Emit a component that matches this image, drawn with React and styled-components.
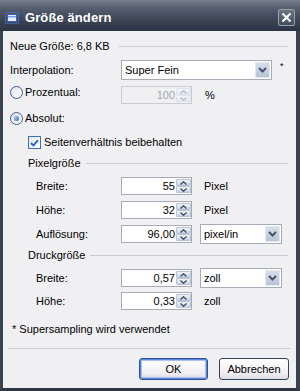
import React from 'react';
import styled, { createGlobalStyle, css } from 'styled-components';

const Global = createGlobalStyle`
  html, body { margin: 0; padding: 0; background: #2f3747; }
  body { font-family: "Liberation Sans", Arial, sans-serif; font-size: 11px; color: #000; }
  #root { width: 300px; height: 391px; }
`;

const Window = styled.div`
  width: 300px;
  height: 391px;
  display: flex;
  flex-direction: column;
  background: #f0f0f3;
  overflow: hidden;
`;

const TitleBar = styled.div`
  flex: 0 0 31px;
  box-sizing: border-box;
  display: flex;
  align-items: center;
  padding: 4px 5px 0 5px;
  background: linear-gradient(#737d8b 0%, #525c6c 30%, #3a4252 70%, #2d3444 100%);
`;

const TitleText = styled.div`
  margin-left: 6px;
  color: #fff;
  font-weight: bold;
  font-size: 13px;
  letter-spacing: 0.1px;
`;

const CloseBtn = styled.div`
  margin-left: auto;
  width: 17px;
  height: 17px;
  box-sizing: border-box;
  border: 1px solid #98a1ad;
  border-radius: 2px;
  background: linear-gradient(#6a7482, #424b5b);
  display: flex;
  align-items: center;
  justify-content: center;
`;

const Frame = styled.div`
  flex: 1;
  display: flex;
  flex-direction: column;
  border-left: 3px solid #3a4250;
  border-right: 4px solid #3a4250;
  border-bottom: 3px solid #2e3544;
  padding: 0 8px 0 7px;
`;

const Row = styled.div`
  display: flex;
  align-items: ${p => p.$align || 'center'};
  height: ${p => p.$h}px;
  margin-top: ${p => p.$mt}px;
  padding-left: ${p => p.$indent || 0}px;
  line-height: 13px;
  white-space: nowrap;
`;

const Label = styled.div`
  flex: 0 0 ${p => p.$w}px;
  display: flex;
  align-items: center;
`;

const Rule = styled.div`
  flex: 1;
  height: 1px;
  margin-left: ${p => p.$gap}px;
  background: #cbcbd0;
`;

const Separator = styled.div`
  height: 1px;
  margin: 12px -2px 0 -2px;
  background: #cbcbd0;
`;

const SpinBox = styled.div`
  display: flex;
  width: 71px;
  height: 18px;
  box-sizing: border-box;
  border: 1px solid ${p => (p.$disabled ? '#c9ccd2' : '#a5acb5')};
  background: ${p => (p.$disabled ? 'transparent' : '#fff')};
  color: ${p => (p.$disabled ? '#a4a7ae' : '#000')};
`;

const SpinValue = styled.div`
  flex: 1;
  text-align: right;
  padding-right: 1px;
  line-height: 16px;
`;

const SpinButtons = styled.div`
  width: 15px;
  display: flex;
  flex-direction: column;
  padding: 1px 0;
  box-sizing: border-box;
`;

const SpinBtn = styled.div`
  flex: 1;
  border: 1px solid ${p => (p.$disabled ? '#dfe4ec' : '#b8c4d6')};
  border-radius: 1px;
  background: ${p => (p.$disabled ? 'linear-gradient(#f3f5f9, #e3e8f0)' : 'linear-gradient(#f1f4f9, #c9d4e5)')};
  display: flex;
  align-items: center;
  justify-content: center;
`;

const Select = styled.div`
  display: flex;
  width: ${p => p.$w}px;
  height: 20px;
  box-sizing: border-box;
  border: 1px solid #a5acb5;
  background: #fff;
  margin-left: ${p => p.$ml || 0}px;
`;

const SelectText = styled.div`
  flex: 1;
  padding-left: 3px;
  line-height: 18px;
`;

const SelectBtn = styled.div`
  width: 15px;
  margin: 1px;
  box-sizing: border-box;
  border: 1px solid #e3e8f1;
  background: linear-gradient(#d7deea, #b9c4d6);
  display: flex;
  align-items: center;
  justify-content: center;
`;

const Unit = styled.div`
  margin-left: ${p => p.$ml}px;
`;

const Star = styled.div`
  margin-left: 8px;
  align-self: flex-start;
  font-size: 9px;
  line-height: 9px;
  margin-top: 2px;
`;

const RadioCircle = styled.div`
  width: 13px;
  height: 13px;
  box-sizing: border-box;
  border-radius: 50%;
  border: 1px solid #3f5f8f;
  background: linear-gradient(135deg, #dfe3ea, #ffffff);
  margin-right: 2px;
  display: flex;
  align-items: center;
  justify-content: center;
  &::after {
    content: '';
    display: ${p => (p.$checked ? 'block' : 'none')};
    width: 5px;
    height: 5px;
    border-radius: 50%;
    background: radial-gradient(circle at 35% 35%, #9fc0ee, #2f62b8);
  }
`;

const CheckBox = styled.div`
  width: 13px;
  height: 13px;
  box-sizing: border-box;
  border: 1px solid #3e70b8;
  background: linear-gradient(135deg, #e3e7ee, #ffffff);
  margin-right: 3px;
  display: flex;
  align-items: center;
  justify-content: center;
`;

const ButtonRow = styled.div`
  display: flex;
  justify-content: flex-end;
  gap: 11px;
  margin: 9px -1px 0 0;
`;

const Button = styled.div`
  width: ${p => p.$w}px;
  height: 22px;
  box-sizing: border-box;
  border-radius: 3px;
  border: 1px solid #34445c;
  background: linear-gradient(#ffffff, #f0f0f4 70%, #d9d9e0);
  display: flex;
  align-items: center;
  justify-content: center;
  ${p =>
    p.$default &&
    css`
      border-color: #2c4f9e;
      box-shadow: inset 0 0 0 1px #5c84dc, inset 0 0 0 2px #a9c2f0;
    `}
`;

const UpArrow = ({ c = '#44516a' }) => (
  <svg width="7" height="4" viewBox="0 0 7 4">
    <path d="M0.5 3.5 L3.5 0.8 L6.5 3.5" fill="none" stroke={c} strokeWidth="1.4" />
  </svg>
);

const DownArrow = ({ c = '#44516a' }) => (
  <svg width="7" height="4" viewBox="0 0 7 4">
    <path d="M0.5 0.5 L3.5 3.2 L6.5 0.5" fill="none" stroke={c} strokeWidth="1.4" />
  </svg>
);

const Chevron = () => (
  <svg width="9" height="6" viewBox="0 0 9 6">
    <path d="M1 1 L4.5 4.5 L8 1" fill="none" stroke="#46536c" strokeWidth="2" />
  </svg>
);

const Spin = ({ value, disabled }) => (
  <SpinBox $disabled={disabled}>
    <SpinValue>{value}</SpinValue>
    <SpinButtons>
      <SpinBtn $disabled={disabled}><UpArrow c={disabled ? '#b3bfd0' : undefined} /></SpinBtn>
      <SpinBtn $disabled={disabled}><DownArrow c={disabled ? '#b3bfd0' : undefined} /></SpinBtn>
    </SpinButtons>
  </SpinBox>
);

const Dropdown = ({ w, ml, children }) => (
  <Select $w={w} $ml={ml}>
    <SelectText>{children}</SelectText>
    <SelectBtn><Chevron /></SelectBtn>
  </Select>
);

const AppIcon = () => (
  <svg width="14" height="12" viewBox="0 0 14 12">
    <rect x="0.5" y="0.5" width="13" height="11" fill="none" stroke="#4d7fe6" strokeDasharray="1 1" />
    <rect x="2.5" y="2.5" width="9" height="7" fill="#e6eefc" stroke="#3a64cc" />
    <rect x="3" y="4" width="8" height="1.5" fill="#7a9ee6" />
  </svg>
);

export default function App() {
  return (
    <>
      <Global />
      <Window>
        <TitleBar>
          <AppIcon />
          <TitleText>Größe ändern</TitleText>
          <CloseBtn>
            <svg width="11" height="11" viewBox="0 0 11 11">
              <path d="M1.5 1.5 L9.5 9.5 M9.5 1.5 L1.5 9.5" stroke="#fff" strokeWidth="2.2" />
            </svg>
          </CloseBtn>
        </TitleBar>
        <Frame>
          <Row $h={14} $mt={8}>
            <span>Neue Größe: 6,8 KB</span>
            <Rule $gap={9} />
          </Row>

          <Row $h={20} $mt={7}>
            <Label $w={111}>Interpolation:</Label>
            <Dropdown w={151}>Super Fein</Dropdown>
            <Star>*</Star>
          </Row>

          <Row $h={18} $mt={6} $align="flex-start">
            <Label $w={111}>
              <RadioCircle />
              Prozentual:
            </Label>
            <Spin value="100" disabled />
            <Unit $ml={13} style={{ alignSelf: 'center' }}>%</Unit>
          </Row>

          <Row $h={13} $mt={8}>
            <RadioCircle $checked />
            Absolut:
          </Row>

          <Row $h={13} $mt={11} $indent={18}>
            <CheckBox>
              <svg width="9" height="8" viewBox="0 0 9 8">
                <path d="M1 4 L3.5 6.5 L8 1.2" fill="none" stroke="#2a5bd0" strokeWidth="1.8" />
              </svg>
            </CheckBox>
            Seitenverhältnis beibehalten
          </Row>

          <Row $h={13} $mt={8} $indent={18}>
            <span>Pixelgröße</span>
            <Rule $gap={5} />
          </Row>

          <Row $h={18} $mt={7} $indent={26}>
            <Label $w={85}>Breite:</Label>
            <Spin value="55" />
            <Unit $ml={12}>Pixel</Unit>
          </Row>

          <Row $h={18} $mt={6} $indent={26}>
            <Label $w={85}>Höhe:</Label>
            <Spin value="32" />
            <Unit $ml={12}>Pixel</Unit>
          </Row>

          <Row $h={20} $mt={5} $indent={26}>
            <Label $w={85}>Auflösung:</Label>
            <Spin value="96,00" />
            <Dropdown w={82} ml={8}>pixel/in</Dropdown>
          </Row>

          <Row $h={13} $mt={5} $indent={18}>
            <span>Druckgröße</span>
            <Rule $gap={5} />
          </Row>

          <Row $h={20} $mt={6} $indent={26}>
            <Label $w={85}>Breite:</Label>
            <Spin value="0,57" />
            <Dropdown w={82} ml={8}>zoll</Dropdown>
          </Row>

          <Row $h={18} $mt={4} $indent={26}>
            <Label $w={85}>Höhe:</Label>
            <Spin value="0,33" />
            <Unit $ml={12}>zoll</Unit>
          </Row>

          <Row $h={13} $mt={13} $indent={2}>
            * Supersampling wird verwendet
          </Row>

          <Separator />

          <ButtonRow>
            <Button $w={69} $default>OK</Button>
            <Button $w={70}>Abbrechen</Button>
          </ButtonRow>
        </Frame>
      </Window>
    </>
  );
}
